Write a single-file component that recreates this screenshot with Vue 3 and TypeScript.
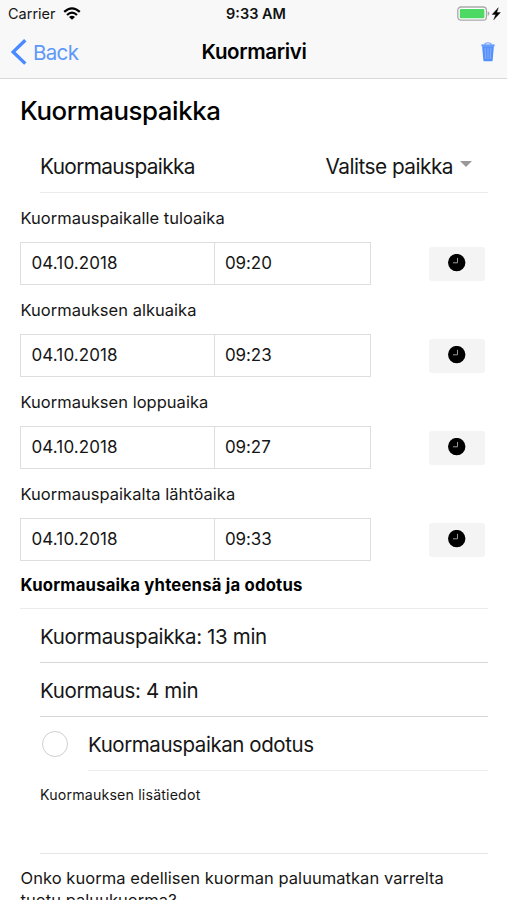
<script setup lang="ts">
interface TimeField {
  label: string
  date: string
  time: string
}

const fields: TimeField[] = [
  { label: 'Kuormauspaikalle tuloaika', date: '04.10.2018', time: '09:20' },
  { label: 'Kuormauksen alkuaika', date: '04.10.2018', time: '09:23' },
  { label: 'Kuormauksen loppuaika', date: '04.10.2018', time: '09:27' },
  { label: 'Kuormauspaikalta lähtöaika', date: '04.10.2018', time: '09:33' },
]

const totals: string[] = ['Kuormauspaikka: 13 min', 'Kuormaus: 4 min']
</script>

<template>
  <div class="screen">
    <header class="top">
      <div class="status">
        <div class="side">
          <span class="carrier">Carrier</span>
          <svg class="wifi" width="18" height="13" viewBox="0 0 18 13" fill="none" stroke="#000" stroke-width="2.2">
            <path d="M1.2 4.9Q9-2.3 16.8 4.9" />
            <path d="M4 8Q9 3.4 14 8" />
            <path d="M6 9.9Q9 7.4 12 9.9L9 12.8Z" fill="#000" stroke="none" />
          </svg>
        </div>
        <span class="clock">9:33 AM</span>
        <div class="side right">
          <svg width="45" height="16" viewBox="0 0 45 16">
            <rect x=".8" y="1" width="28.6" height="13.2" rx="3.2" fill="#fff" stroke="#a9a9a9" stroke-width="1.3" />
            <rect x="2.8" y="3" width="24.6" height="9.2" rx="1" fill="#4cd964" />
            <path d="M30.7 5.3q1.7.5 1.7 2.3t-1.7 2.3z" fill="#a9a9a9" />
            <path d="M41.3 1.7 35.2 8.5h3.5l-2 5.3 6.7-7.2h-3.7z" fill="#000" stroke="#000" stroke-width=".4" />
          </svg>
        </div>
      </div>
      <nav class="nav">
        <button class="back">
          <svg width="17" height="27" viewBox="0 0 17 27" fill="none" stroke="#488aff" stroke-width="3.4">
            <path d="M15.3 1.2 3.2 12.9 15.3 24.6" />
          </svg>
          <span>Back</span>
        </button>
        <h1>Kuormarivi</h1>
        <button class="trash" aria-label="Poista">
          <svg width="14" height="20" viewBox="0 0 14 20">
            <path d="M3.5 2.5Q4 .9 7 .9t3.5 1.6" fill="none" stroke="#7eabfa" stroke-width="1.2" />
            <path d="M.4 2.4h13.2v2H.4z" fill="#639afc" />
            <path d="M1.1 4.2h11.8l-1.3 14.2q-.1.9-1 .9H3.4q-.9 0-1-.9z" fill="#558ff9" />
            <path d="M4.1 6l.6 11M7 6v11M9.9 6l-.6 11" fill="none" stroke="#8bb5ff" stroke-width=".9" />
          </svg>
        </button>
      </nav>
    </header>

    <main>
      <h2>Kuormauspaikka</h2>
      <div class="select-row">
        <span class="place">Kuormauspaikka</span>
        <span class="choice">Valitse paikka</span>
        <i class="caret"></i>
      </div>

      <section v-for="f in fields" :key="f.label" class="field">
        <label>{{ f.label }}</label>
        <div class="controls">
          <div class="inputs">
            <div class="date">{{ f.date }}</div>
            <div class="time">{{ f.time }}</div>
          </div>
          <button class="now" aria-label="Nyt">
            <svg width="18" height="18" viewBox="0 0 18 18">
              <circle cx="8.7" cy="8.6" r="8.7" fill="#000" />
              <path d="M9.5 3.9v4.9H5" fill="none" stroke="#999" stroke-width="1" />
            </svg>
          </button>
        </div>
      </section>

      <h3>Kuormausaika yhteensä ja odotus</h3>
      <ul>
        <li v-for="t in totals" :key="t">{{ t }}</li>
      </ul>
      <div class="check-row">
        <i class="circle"></i>
        <div class="check-label">Kuormauspaikan odotus</div>
      </div>
      <div class="notes">Kuormauksen lisätiedot</div>
      <p>Onko kuorma edellisen kuorman paluumatkan varrelta<br />tuotu paluukuorma?</p>
    </main>
  </div>
</template>

<style>
body {
  margin: 0;
  background: #fff;
}
</style>

<style scoped>
.screen {
  box-sizing: border-box;
  width: 507px;
  height: 900px;
  overflow: hidden;
  background: #fff;
  color: #161616;
  font-family: Inter, 'Liberation Sans', sans-serif;
  white-space: nowrap;
}
h1, h2, h3, ul, p { margin: 0; padding: 0; }
svg { display: block; flex: none; }
button {
  border: 0;
  padding: 0;
  background: none;
  font: inherit;
}
.top {
  box-sizing: border-box;
  height: 79px;
  background: #f8f8f8;
  border-bottom: 1px solid #d8d8d8;
}
.status {
  display: grid;
  grid-template-columns: 1fr auto 1fr;
  height: 27px;
  padding: 0 5px 0 8px;
  align-items: center;
}
.side { display: flex; align-items: center; gap: 7px; }
.right { justify-content: flex-end; }
.carrier { font-size: 14.5px; }
.clock { padding-left: 2px; font-size: 14.5px; font-weight: 600; color: #111; }
.nav {
  display: grid;
  grid-template-columns: 1fr auto 1fr;
  align-items: center;
  height: 50px;
  padding: 0 12px 0 10px;
}
.back {
  display: flex;
  align-items: center;
  gap: 6px;
  color: #5d98fb;
  font-size: 20.5px;
  letter-spacing: -.65px;
}
h1 {
  padding-left: 3px;
  font-size: 20.5px;
  line-height: 28px;
  letter-spacing: -.35px;
  font-weight: 600;
  color: #000;
}
.trash { justify-self: end; }
main { padding: 0 19px 0 20px; }
h2 {
  height: 62px;
  line-height: 63px;
  font-size: 25.8px;
  letter-spacing: -.4px;
  font-weight: 500;
  color: #000;
}
.select-row {
  display: flex;
  align-items: center;
  height: 51px;
  margin-left: 20px;
  border-bottom: 1px solid #ececec;
  font-size: 20.8px;
  letter-spacing: -.62px;
}
.choice { margin-left: auto; letter-spacing: -.52px; }
.caret {
  width: 0;
  margin: -5px 16px 0 7px;
  border: 6px solid transparent;
  border-top-color: #999;
  border-bottom: 0;
}
.field { height: 92px; }
label {
  display: block;
  height: 49px;
  padding-left: .5px;
  line-height: 50px;
  font-size: 16.5px;
  letter-spacing: .02px;
}
.controls { display: flex; justify-content: space-between; align-items: center; }
.inputs {
  box-sizing: border-box;
  display: grid;
  grid-template-columns: 193px 1fr;
  width: 351px;
  height: 43px;
  border: 1px solid #dedede;
  line-height: 41px;
  font-size: 17px;
}
.date { padding-left: 10.5px; letter-spacing: .1px; }
.time { padding-left: 10px; border-left: 1px solid #dedede; letter-spacing: -.1px; }
.now {
  display: grid;
  place-items: center;
  width: 56px;
  height: 34px;
  margin-right: 3px;
  border-radius: 3px;
  background: #f4f4f4;
}
.now svg { position: relative; top: -1px; }
h3 {
  height: 47px;
  padding-left: .5px;
  line-height: 49px;
  border-bottom: 1px solid #ececec;
  font-size: 16.7px;
  letter-spacing: .2px;
  font-weight: 700;
  color: #000;
}
ul { list-style: none; margin-left: 20px; font-size: 20.5px; letter-spacing: -.36px; }
li { height: 53px; line-height: 55px; border-bottom: 1px solid #d7d7d7; }
.check-row {
  display: flex;
  align-items: center;
  height: 54px;
  margin-left: 22px;
  font-size: 20.5px;
  letter-spacing: -.43px;
}
.circle {
  box-sizing: border-box;
  width: 26px;
  height: 26px;
  border: 1.4px solid #cfcfcf;
  border-radius: 50%;
}
.check-label { flex: 1; height: 53px; margin-left: 20px; line-height: 55px; border-bottom: 1px solid #ededed; }
.notes {
  height: 82px;
  margin-left: 20px;
  border-bottom: 1px solid #e5e5e5;
  line-height: 47px;
  font-size: 14.2px;
  letter-spacing: .17px;
}
p { padding: 13px 0 0 .5px; line-height: 22px; font-size: 16.5px; letter-spacing: .05px; }
</style>
